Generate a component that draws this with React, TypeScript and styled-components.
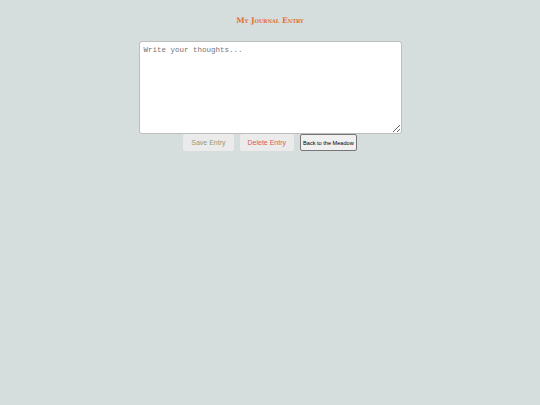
import styled, { createGlobalStyle } from "styled-components";

const GlobalStyle = createGlobalStyle`
  html, body {
    margin: 0;
    padding: 0;
    background-color: #d6dddd;
    height: 100%;
  }
`;

const App = () => {
  return (
    <>
      <GlobalStyle />
      <Page>
        <Title>My Journal Entry</Title>
        <Editor placeholder="Write your thoughts..." />
        <ButtonRow>
          <ActionButton $color="#949a72">Save Entry</ActionButton>
          <ActionButton $color="#dc5a5a">Delete Entry</ActionButton>
          <BackButton>Back to the Meadow</BackButton>
        </ButtonRow>
      </Page>
    </>
  );
};

const Page = styled.div`
  display: flex;
  flex-direction: column;
  align-items: center;
  padding-top: 15px;
  width: 540px;
`;

const Title = styled.h1`
  margin: 0 0 14px 0;
  font-family: "DejaVu Serif", "Liberation Serif", serif;
  font-variant: small-caps;
  font-weight: bold;
  font-size: 7.6px;
  line-height: 12px;
  color: #e0703a;
`;

const Editor = styled.textarea`
  box-sizing: border-box;
  width: 263px;
  height: 93px;
  margin: 0;
  padding: 4px;
  font-family: "Liberation Mono", monospace;
  font-size: 7.5px;
  color: #333;
  background-color: #ffffff;
  border: 1px solid #bdbdbd;
  border-radius: 3px;
  outline: none;

  &::placeholder {
    color: #757575;
  }
`;

const ButtonRow = styled.div`
  display: flex;
  align-items: center;
  gap: 6px;
  margin-top: 0;
`;

const ActionButton = styled.button<{ $color: string }>`
  height: 17px;
  padding: 0 8px;
  font-family: "Liberation Sans", Arial, sans-serif;
  font-size: 7px;
  color: ${(p) => p.$color};
  background-color: #ebebeb;
  border: none;
  border-radius: 2px;
`;

const BackButton = styled.button`
  height: 17px;
  padding: 0 2px;
  font-family: "Liberation Sans", Arial, sans-serif;
  font-size: 5.6px;
  color: #000;
  background-color: #f0f0f0;
  border: 1px solid #767676;
  border-radius: 2px;
`;

export default App;
